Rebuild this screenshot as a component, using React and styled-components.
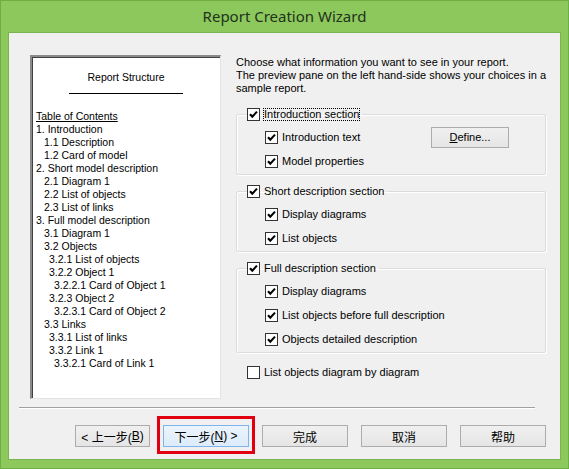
import React from "react";
import styled, { createGlobalStyle } from "styled-components";

const GlobalStyle = createGlobalStyle`
  html, body {
    margin: 0;
    padding: 0;
    background: #8cc85c;
  }
  body {
    font-family: "Liberation Sans", Arial, sans-serif;
  }
`;

const toc = [
  { text: "Table of Contents", level: 0, head: true },
  { text: "1. Introduction", level: 0 },
  { text: "1.1 Description", level: 1 },
  { text: "1.2 Card of model", level: 1 },
  { text: "2. Short model description", level: 0 },
  { text: "2.1 Diagram 1", level: 1 },
  { text: "2.2 List of objects", level: 1 },
  { text: "2.3 List of links", level: 1 },
  { text: "3. Full model description", level: 0 },
  { text: "3.1 Diagram 1", level: 1 },
  { text: "3.2 Objects", level: 1 },
  { text: "3.2.1 List of objects", level: 2 },
  { text: "3.2.2 Object 1", level: 2 },
  { text: "3.2.2.1 Card of Object 1", level: 3 },
  { text: "3.2.3 Object 2", level: 2 },
  { text: "3.2.3.1 Card of Object 2", level: 3 },
  { text: "3.3 Links", level: 1 },
  { text: "3.3.1 List of links", level: 2 },
  { text: "3.3.2 Link 1", level: 2 },
  { text: "3.3.2.1 Card of Link 1", level: 3 },
];

const indents = [0, 8, 13, 18];

const CheckBox = ({ checked }) => (
  <Box>
    {checked && (
      <svg width="11" height="11" viewBox="0 0 11 11">
        <path d="M2 5.2 L4.3 7.6 L9 2.6" fill="none" stroke="#000" strokeWidth="2.1" />
      </svg>
    )}
  </Box>
);

const Check = ({ checked = true, focus, children }) => (
  <CheckLabel>
    <CheckBox checked={checked} />
    <LabelText $focus={focus}>{children}</LabelText>
  </CheckLabel>
);

const App = () => {
  return (
    <>
      <GlobalStyle />
      <Window>
        <TitleBar>Report Creation Wizard</TitleBar>
        <Client>
          <Body>
            <Preview>
              <PreviewTitle>Report Structure</PreviewTitle>
              <Rule />
              <TocList>
                {toc.map((item) => (
                  <TocItem key={item.text} $indent={indents[item.level]} $head={item.head}>
                    {item.text}
                  </TocItem>
                ))}
              </TocList>
            </Preview>
            <Options>
              <Intro>
                <span>Choose what information you want to see in your report.</span>
                <span>The preview pane on the left hand-side shows your choices in a</span>
                <span>sample report.</span>
              </Intro>

              <Group>
                <Legend>
                  <Check focus>Introduction section</Check>
                </Legend>
                <Row>
                  <Check>Introduction text</Check>
                  <SmallButton>
                    <u>D</u>efine...
                  </SmallButton>
                </Row>
                <Row>
                  <Check>Model properties</Check>
                </Row>
              </Group>

              <Group>
                <Legend>
                  <Check>Short description section</Check>
                </Legend>
                <Row>
                  <Check>Display diagrams</Check>
                </Row>
                <Row>
                  <Check>List objects</Check>
                </Row>
              </Group>

              <Group>
                <Legend>
                  <Check>Full description section</Check>
                </Legend>
                <Row>
                  <Check>Display diagrams</Check>
                </Row>
                <Row>
                  <Check>List objects before full description</Check>
                </Row>
                <Row>
                  <Check>Objects detailed description</Check>
                </Row>
              </Group>

              <LooseRow>
                <Check checked={false}>List objects diagram by diagram</Check>
              </LooseRow>
            </Options>
          </Body>
          <Separator />
          <ButtonBar>
            <Button $w={75}>
              &lt; 上一步(<u>B</u>)
            </Button>
            <Highlight>
              <Button $default>
                下一步(<u>N</u>) &gt;
              </Button>
              <RedFrame />
            </Highlight>
            <Button>完成</Button>
            <Button>取消</Button>
            <Button>帮助</Button>
          </ButtonBar>
        </Client>
      </Window>
    </>
  );
};

const Window = styled.div`
  width: 569px;
  height: 469px;
  box-sizing: border-box;
  display: flex;
  flex-direction: column;
  background: #8cc85c;
  border: 1px solid #6fae45;
`;

const TitleBar = styled.div`
  height: 30px;
  display: flex;
  align-items: center;
  justify-content: center;
  font-family: "Noto Sans", "Open Sans", sans-serif;
  font-size: 15px;
  color: #22321c;
  padding-bottom: 1px;
`;

const Client = styled.div`
  flex: 1;
  margin: 0 7px 8px 7px;
  background: #f0f0f0;
  border: 1px solid #78b54e;
  display: flex;
  flex-direction: column;
  padding: 22px 14px 0 21px;
`;

const Body = styled.div`
  display: flex;
  gap: 15px;
  height: 344px;
`;

const Preview = styled.div`
  width: 192px;
  box-sizing: border-box;
  background: #fff;
  border-top: 2px solid #8a8a8a;
  border-left: 2px solid #8a8a8a;
  border-right: 1px solid #e3e3e3;
  border-bottom: 1px solid #e3e3e3;
  box-shadow: inset 1px 1px 0 #404040;
  font-size: 10.5px;
  color: #000;
  display: flex;
  flex-direction: column;
`;

const PreviewTitle = styled.div`
  text-align: center;
  margin-top: 14px;
  line-height: 13px;
`;

const Rule = styled.div`
  width: 114px;
  height: 1px;
  background: #000;
  margin: 9px auto 16px 37px;
`;

const TocList = styled.div`
  padding-left: 4px;
`;

const TocItem = styled.div`
  line-height: 13px;
  padding-left: ${(p) => p.$indent}px;
  text-decoration: ${(p) => (p.$head ? "underline" : "none")};
  white-space: nowrap;
`;

const Options = styled.div`
  flex: 1;
  display: flex;
  flex-direction: column;
  font-size: 11px;
  color: #000;
  padding-top: 1px;
`;

const Intro = styled.div`
  display: flex;
  flex-direction: column;
  line-height: 13px;
  margin-bottom: 13px;
  white-space: nowrap;
`;

const Group = styled.fieldset`
  margin: 0 0 10px 0;
  padding: 4px 0 1px 10px;
  border: 1px solid #dcdcdc;
  border-radius: 2px;
  box-shadow: inset 1px 1px 0 #fff, 1px 1px 0 #fff;
  min-inline-size: 0;
`;

const Legend = styled.legend`
  padding: 0 2px 0 0;
  margin-left: 0;
  height: 13px;
  display: flex;
  align-items: center;
`;

const Row = styled.div`
  height: 24px;
  display: flex;
  align-items: center;
  justify-content: space-between;
  padding-left: 18px;
  padding-right: 36px;
`;

const LooseRow = styled.div`
  padding-left: 11px;
  height: 13px;
  display: flex;
  align-items: center;
  margin-top: 3px;
`;

const CheckLabel = styled.label`
  display: inline-flex;
  align-items: center;
  gap: 3px;
  white-space: nowrap;
`;

const Box = styled.span`
  width: 13px;
  height: 13px;
  box-sizing: border-box;
  border: 1px solid #333;
  background: #fff;
  display: inline-flex;
  align-items: center;
  justify-content: center;
  flex: none;
`;

const LabelText = styled.span`
  line-height: 13px;
  padding: 0 1px;
  outline: ${(p) => (p.$focus ? "1px dotted #000" : "none")};
  outline-offset: -1px;
`;

const SmallButton = styled.div`
  width: 78px;
  height: 21px;
  box-sizing: border-box;
  border: 1px solid #acacac;
  background: linear-gradient(#f0f0f0, #e5e5e5);
  display: flex;
  align-items: center;
  justify-content: center;
  font-size: 11px;
`;

const Separator = styled.div`
  height: 1px;
  background: #a0a0a0;
  border-bottom: 1px solid #fff;
  margin: 8px 11px 0 -11px;
`;

const ButtonBar = styled.div`
  display: flex;
  align-items: center;
  margin-top: 16px;
  padding-left: 45px;
  gap: 13px;
`;

const Button = styled.div`
  width: ${(p) => p.$w || 86}px;
  height: 22px;
  box-sizing: border-box;
  border: 1px solid ${(p) => (p.$default ? "#7eb4ea" : "#acacac")};
  background: ${(p) =>
    p.$default ? "linear-gradient(#ecf4fc, #dcecfc)" : "linear-gradient(#f0f0f0, #e5e5e5)"};
  display: flex;
  align-items: center;
  justify-content: center;
  font-family: "Liberation Sans", "Noto Sans CJK SC", sans-serif;
  font-size: 12px;
  color: #000;
  white-space: pre;
`;

const Highlight = styled.div`
  position: relative;
`;

const RedFrame = styled.span`
  position: absolute;
  left: -6px;
  right: -6px;
  top: -9px;
  bottom: -7px;
  border: 3px solid #e0000f;
`;

export default App;
